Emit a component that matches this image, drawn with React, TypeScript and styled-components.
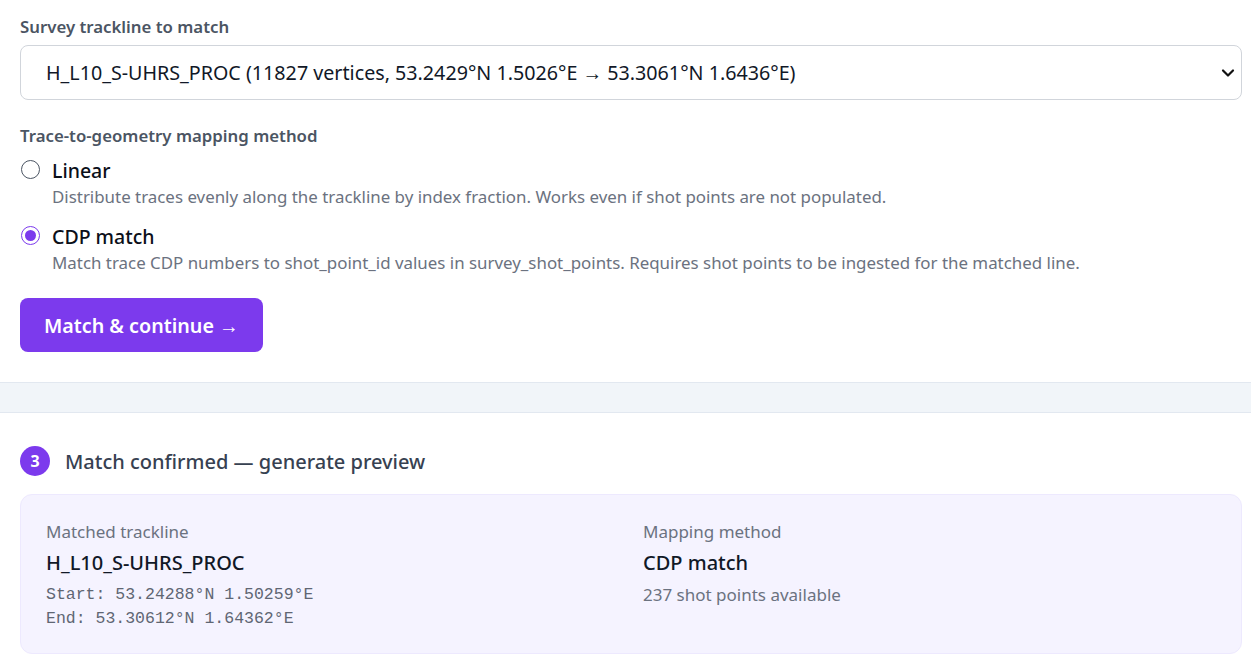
import React, { useState } from 'react';
import styled, { createGlobalStyle } from 'styled-components';

const GlobalStyle = createGlobalStyle`
  html, body {
    margin: 0;
    padding: 0;
    background: #ffffff;
    font-family: "Noto Sans", "Open Sans", Arial, sans-serif;
    color: #111827;
  }
  * { box-sizing: border-box; }
`;

const Page = styled.div`
  display: flex;
  flex-direction: column;
  width: 100%;
`;

const Panel = styled.section<{ $top?: number }>`
  background: #ffffff;
  padding: ${p => p.$top ?? 0}px 9px 8px 20px;
  display: flex;
  flex-direction: column;
`;

const Divider = styled.div`
  height: 31px;
  background: #f1f5f9;
  border-top: 1px solid #e2e8f0;
  border-bottom: 1px solid #e2e8f0;
`;

const FieldLabel = styled.div`
  font-size: 16.8px;
  font-weight: 600;
  color: #4b5563;
  line-height: 22px;
  margin-bottom: 7px;
`;

const SelectWrap = styled.div`
  position: relative;
  margin-bottom: 25px;
`;

const Select = styled.select`
  appearance: none;
  width: 100%;
  height: 55px;
  padding: 0 48px 0 25px;
  font-family: inherit;
  font-size: 19.7px;
  color: #111827;
  background: #ffffff;
  border: 1px solid #d1d5db;
  border-radius: 8px;
  outline: none;
`;

const Chevron = styled.svg`
  position: absolute;
  right: 7px;
  top: 50%;
  transform: translateY(-50%);
  pointer-events: none;
`;

const RadioGroup = styled.div`
  display: flex;
  flex-direction: column;
  gap: 14px;
  margin-top: 3px;
  margin-bottom: 23px;
`;

const RadioRow = styled.label`
  display: grid;
  grid-template-columns: 32px 1fr;
  cursor: pointer;
`;

const RadioDot = styled.span<{ $checked: boolean }>`
  width: 19px;
  height: 19px;
  margin-top: 3px;
  margin-left: 1px;
  border-radius: 50%;
  border: 1.5px solid ${p => (p.$checked ? '#7c3aed' : '#4b5563')};
  background: #fff;
  display: flex;
  align-items: center;
  justify-content: center;

  &::after {
    content: '';
    width: 11px;
    height: 11px;
    border-radius: 50%;
    background: ${p => (p.$checked ? '#7c3aed' : 'transparent')};
  }
`;

const OptionTitle = styled.div`
  font-size: 19.5px;
  font-weight: 500;
  color: #0b0f19;
  line-height: 28px;
`;

const OptionDesc = styled.div`
  font-size: 16.9px;
  color: #6b7280;
  line-height: 24px;
`;

const PrimaryButton = styled.button`
  align-self: flex-start;
  height: 54px;
  padding: 0 24px;
  border: none;
  border-radius: 8px;
  background: #7c3aed;
  color: #ffffff;
  font-family: inherit;
  font-size: 19.7px;
  font-weight: 600;
  cursor: pointer;
  margin-bottom: 22px;
`;

const StepHeader = styled.div`
  display: flex;
  align-items: center;
  gap: 15px;
  margin-bottom: 18px;
`;

const StepBadge = styled.span`
  width: 30px;
  height: 30px;
  border-radius: 50%;
  background: #7c3aed;
  color: #fff;
  font-size: 16px;
  font-weight: 700;
  display: flex;
  align-items: center;
  justify-content: center;
`;

const StepTitle = styled.h3`
  margin: 0;
  font-size: 20px;
  font-weight: 500;
  color: #374151;
`;

const SummaryCard = styled.div`
  display: grid;
  grid-template-columns: 1fr 1fr;
  column-gap: 24px;
  padding: 26px 25px 22px;
  background: #f5f3ff;
  border: 1px solid #ede9fe;
  border-radius: 12px;
`;

const SummaryCol = styled.div`
  display: flex;
  flex-direction: column;
`;

const SummaryLabel = styled.div`
  font-size: 17px;
  color: #6b7280;
  line-height: 22px;
  margin-bottom: 7px;
`;

const SummaryValue = styled.div`
  font-size: 20px;
  font-weight: 500;
  color: #111827;
  line-height: 26px;
  margin-bottom: 7px;
`;

const MonoLine = styled.div`
  font-family: "Liberation Mono", "DejaVu Sans Mono", monospace;
  font-size: 16.5px;
  color: #5f6673;
  line-height: 24px;
`;

const Note = styled.div`
  font-size: 17px;
  color: #6b7280;
  line-height: 24px;
`;

const methods = [
  {
    id: 'linear',
    title: 'Linear',
    desc: 'Distribute traces evenly along the trackline by index fraction. Works even if shot points are not populated.',
  },
  {
    id: 'cdp',
    title: 'CDP match',
    desc: 'Match trace CDP numbers to shot_point_id values in survey_shot_points. Requires shot points to be ingested for the matched line.',
  },
];

export default function App() {
  const [method, setMethod] = useState('cdp');

  return (
    <Page>
      <GlobalStyle />
      <Panel $top={16}>
        <FieldLabel>Survey trackline to match</FieldLabel>
        <SelectWrap>
          <Select defaultValue="h_l10">
            <option value="h_l10">
              H_L10_S-UHRS_PROC (11827 vertices, 53.2429°N 1.5026°E → 53.3061°N 1.6436°E)
            </option>
          </Select>
          <Chevron width="14" height="10" viewBox="0 0 14 10">
            <path d="M2 2.5 L7 7.5 L12 2.5" fill="none" stroke="#111" strokeWidth="2.2" strokeLinecap="round" strokeLinejoin="round" />
          </Chevron>
        </SelectWrap>

        <FieldLabel>Trace-to-geometry mapping method</FieldLabel>
        <RadioGroup>
          {methods.map(m => (
            <RadioRow key={m.id} onClick={() => setMethod(m.id)}>
              <RadioDot $checked={method === m.id} />
              <div>
                <OptionTitle>{m.title}</OptionTitle>
                <OptionDesc>{m.desc}</OptionDesc>
              </div>
            </RadioRow>
          ))}
        </RadioGroup>

        <PrimaryButton>Match &amp; continue →</PrimaryButton>
      </Panel>

      <Divider />

      <Panel $top={33}>
        <StepHeader>
          <StepBadge>3</StepBadge>
          <StepTitle>Match confirmed — generate preview</StepTitle>
        </StepHeader>
        <SummaryCard>
          <SummaryCol>
            <SummaryLabel>Matched trackline</SummaryLabel>
            <SummaryValue>H_L10_S-UHRS_PROC</SummaryValue>
            <MonoLine>Start: 53.24288°N 1.50259°E</MonoLine>
            <MonoLine>End: 53.30612°N 1.64362°E</MonoLine>
          </SummaryCol>
          <SummaryCol>
            <SummaryLabel>Mapping method</SummaryLabel>
            <SummaryValue>CDP match</SummaryValue>
            <Note>237 shot points available</Note>
          </SummaryCol>
        </SummaryCard>
      </Panel>
    </Page>
  );
}
